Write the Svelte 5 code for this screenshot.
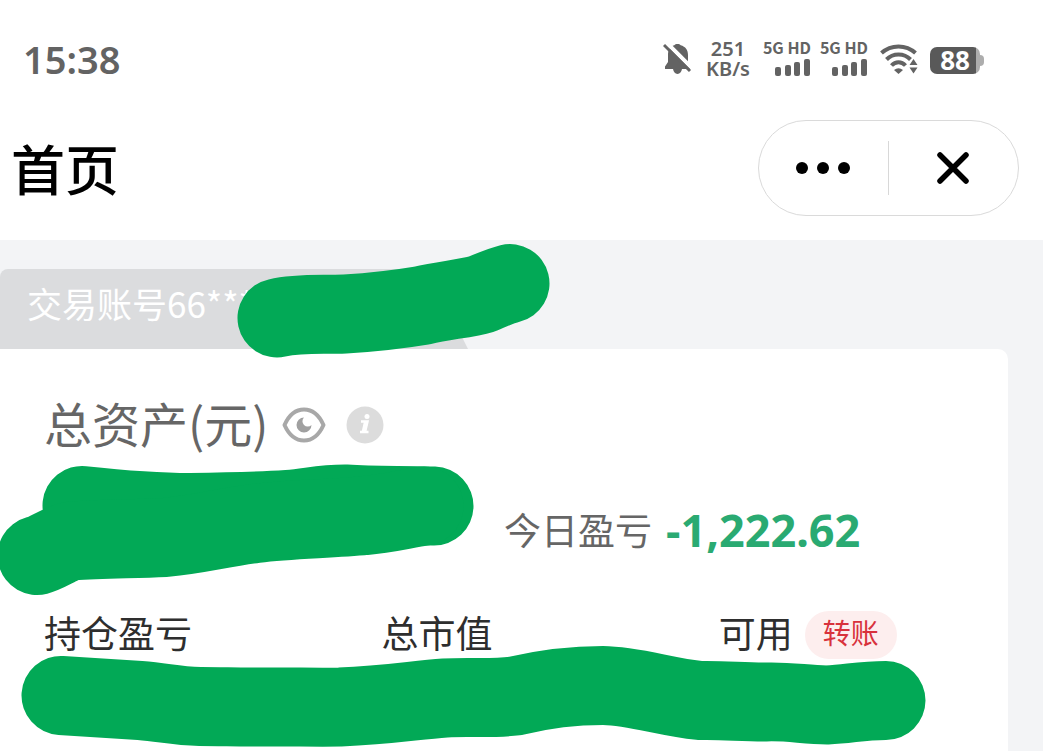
<script>
  const networks = ['5G HD', '5G HD'];
  const holdings = [
    { label: '持仓盈亏' },
    { label: '总市值' },
    { label: '可用', action: '转账' }
  ];
</script>

<div class="page">
  <div class="status">
    <time class="clock">15:38</time>
    <div class="indicators">
      <svg class="bell" width="30" height="34" viewBox="0 0 30 34" aria-hidden="true">
        <path d="M14.500 2c1.500 0 2.500.5 3.200 1.200C22.500 4.500 25 8 25 13v7l3 4.500V27h-9c-.6 2.800-2 5-4.500 5S10.600 29.800 10 27H2v-2.500L5 20v-7c0-5 2-8.500 6.300-9.800C12 2.500 13 2 14.500 2z" fill="#636363" />
        <path d="M2-1 31 28" stroke="#fff" stroke-width="4" />
        <path d="M1 3 27 29" stroke="#636363" stroke-width="3" />
      </svg>
      <div class="speed">251 KB/s</div>
      {#each networks as name}
        <div class="network">
          <span>{name}</span>
          <svg width="36" height="17" viewBox="0 0 36 17" fill="#636363" aria-hidden="true">
            <rect x="0" y="8" width="6" height="9" rx="2" />
            <rect x="10" y="6" width="6" height="11" rx="2" />
            <rect x="19" y="3" width="6" height="14" rx="2" />
            <rect x="29" y="0" width="6" height="17" rx="2" />
          </svg>
        </div>
      {/each}
      <svg class="wifi" width="38" height="30" viewBox="0 0 38 30" aria-hidden="true">
        <g fill="none" stroke="#636363" stroke-width="4">
          <path d="M1.500 9C11 .2 26 .2 35.500 9" />
          <path d="M6.500 15.500C13 8.700 24 8.700 30.500 15.500" />
          <path d="M11.500 21.500C15.500 17 21.500 17 25.500 21.500" />
        </g>
        <path d="M14 26Q18.500 22.500 23 26L18.500 30z" fill="#636363" />
        <path d="M33.500 15 37.500 21h-8zM29.500 23.500h8L33.500 29.500z" fill="#636363" stroke="#fff" stroke-width="1.500" paint-order="stroke" />
      </svg>
      <div class="battery"><span>88</span></div>
    </div>
  </div>

  <header>
    <h1>首页</h1>
    <div class="capsule">
      <button aria-label="更多">
        <svg width="56" height="12" viewBox="0 0 56 12" aria-hidden="true">
          <circle cx="6" cy="6" r="6" /><circle cx="27" cy="6" r="6" /><circle cx="48" cy="6" r="6" />
        </svg>
      </button>
      <i></i>
      <button aria-label="关闭">
        <svg width="34" height="34" viewBox="0 0 34 34" aria-hidden="true">
          <path d="M3 4 29 30M29 4 3 30" stroke="#000" stroke-width="5.500" stroke-linecap="round" />
        </svg>
      </button>
    </div>
  </header>

  <main>
    <button class="account">交易账号66****</button>
    <section class="card">
      <div class="total">
        <h2>总资产(元)</h2>
        <button class="eye" aria-label="隐藏金额">
          <svg width="44" height="36" viewBox="0 0 44 36" aria-hidden="true">
            <path d="M2.500 18C7 8 14 2.500 22 2.500S37 8 41.500 18C37 28 30 33.500 22 33.500S7 28 2.500 18z" fill="none" stroke="#a8a8a8" stroke-width="4" stroke-linejoin="round" />
            <path d="M22 10.500a7.500 7.500 0 1 0 7.500 7.500 5 5 0 0 1-7.500-7.500z" fill="#a0a0a0" />
          </svg>
        </button>
        <button class="info" aria-label="说明">
          <svg width="38" height="38" viewBox="0 0 38 38" aria-hidden="true">
            <circle cx="19" cy="19" r="18.500" fill="#dcdcdc" />
            <circle cx="21" cy="10.500" r="2.500" fill="#fff" />
            <path d="M15 15.500h6.500L19 26h3.500M14 26h5" fill="none" stroke="#fff" stroke-width="2.500" />
            <path d="M20 15.500 17.500 26.500" stroke="#fff" stroke-width="4" />
          </svg>
        </button>
      </div>
      <div class="today">
        <span>今日盈亏</span>
        <strong>-1,222.62</strong>
      </div>
      <div class="holdings">
        {#each holdings as item}
          <div class="holding">
            <span>{item.label}</span>
            {#if item.action}<button>{item.action}</button>{/if}
          </div>
        {/each}
      </div>
    </section>
    <svg class="marker" width="960" height="511" viewBox="0 240 960 511" aria-hidden="true">
      <g fill="none" stroke="#02a956" stroke-width="79" stroke-linecap="round" stroke-linejoin="round">
        <path d="M277 318C300 313 320 315 345 314C370 312.500 398 309.500 422 305.500C445 300 465 299 482 294C494 289 500 286 510 283.500" />
        <path d="M82 505.500C115 509 150 512.500 190 512.500C230 512 265 511 288 509.500C310 508 320 504 345 504C375 506 400 505 434 506" />
        <path d="M424 506C400 510 385 514 365 515.500C330 519 290 519 255 523.500C220 528 200 534 165 537.500C130 539 100 539 72 541C60 543 50 552 37 555.500" />
        <path d="M61 695.500C90 697.500 115 699 140 700.500C165 702.500 175 706 200 706.500C225 706.500 240 707.500 265 707C290 706.500 310 707.500 340 707C390 705 415 700 445 698C470 696.500 490 699 515 696C540 690 565 685.500 603 685.500C635 686 665 697 700 700.500C725 700 740 702 765 702C790 701 805 705 827 705C850 704 860 700.500 886 700.500" />
      </g>
    </svg>
  </main>
</div>

<style>
  :global(body) {
    margin: 0;
    background: #f3f4f6;
  }
  .page {
    min-height: 100vh;
    overflow: hidden;
    font-family: "Noto Sans CJK SC", "Noto Sans", sans-serif;
    color: #2e2e2e;
  }
  button {
    margin: 0;
    padding: 0;
    border: 0;
    background: none;
    font: inherit;
    color: inherit;
    cursor: pointer;
  }
  svg {
    display: block;
  }
  .status {
    display: flex;
    align-items: center;
    justify-content: space-between;
    height: 120px;
    padding: 0 63px 2px 23px;
    box-sizing: border-box;
    background: #fff;
    color: #636363;
  }
  .clock {
    font: 600 38px/40px "Noto Sans", sans-serif;
  }
  .indicators {
    display: flex;
    align-items: center;
    gap: 12px;
  }
  .speed {
    width: 46px;
    font: 600 20px/20px "Noto Sans", sans-serif;
    text-align: center;
  }
  .network {
    display: flex;
    flex-direction: column;
    align-items: flex-end;
    gap: 1px;
    width: 48px;
    margin-right: -3px;
    font: 700 16px/18px "Noto Sans CJK SC", sans-serif;
    white-space: nowrap;
  }
  .network span {
    margin-top: -4px;
    padding-bottom: 2px;
  }
  .wifi {
    margin-left: 3px;
  }
  .battery {
    position: relative;
    width: 50px;
    height: 27px;
    margin-top: 2px;
    border-radius: 7px;
    background: linear-gradient(90deg, #595959 46px, #adadad 46px);
    color: #fff;
    font: 700 26px/27px "Noto Sans", sans-serif;
    text-align: center;
  }
  .battery::after {
    content: "";
    position: absolute;
    left: 50px;
    top: 8px;
    width: 4px;
    height: 11px;
    border-radius: 0 4px 4px 0;
    background: #adadad;
  }
  header {
    display: flex;
    align-items: flex-start;
    justify-content: space-between;
    height: 120px;
    padding: 0 24px 0 11px;
    box-sizing: border-box;
    background: #fff;
  }
  h1 {
    margin: 0;
    font-size: 54px;
    line-height: 96px;
    font-weight: 500;
    color: #000;
  }
  .capsule {
    display: flex;
    align-items: center;
    width: 261px;
    height: 96px;
    box-sizing: border-box;
    border: 1px solid #dadada;
    border-radius: 48px;
  }
  .capsule button {
    flex: 1;
    display: flex;
    align-items: center;
    justify-content: center;
    height: 100%;
  }
  .capsule i {
    width: 1px;
    height: 54px;
    background: #d8d8d8;
  }
  main {
    position: relative;
    padding-top: 29px;
  }
  .account {
    display: block;
    width: 468px;
    height: 80px;
    padding: 0 0 12px 27px;
    border-radius: 8px 0 0 0;
    background: #dbdcde;
    clip-path: polygon(0 0, 428px 0, 100% 100%, 0 100%);
    color: #fff;
    font-size: 35px;
    line-height: 68px;
    text-align: left;
  }
  .card {
    min-height: 402px;
    margin-right: 35px;
    padding: 40px 0 0 44px;
    box-sizing: border-box;
    border-radius: 0 10px 0 0;
    background: #fff;
  }
  .total {
    display: flex;
    align-items: center;
    height: 72px;
  }
  h2 {
    margin: 0 14px 0 0;
    padding-bottom: 6px;
    font-size: 48px;
    line-height: 66px;
    font-weight: 400;
    color: #666;
  }
  .info {
    margin-left: 20px;
  }
  .today {
    display: flex;
    align-items: center;
    gap: 14px;
    height: 64px;
    margin: 37px 0 0 460px;
    font-size: 37px;
    line-height: 62px;
    color: #666;
    white-space: nowrap;
  }
  .today span {
    padding-bottom: 2px;
  }
  .today strong {
    font: 700 45px/64px "Noto Sans", sans-serif;
    color: #2aaa72;
  }
  .holdings {
    display: grid;
    grid-template-columns: 35% 35% 1fr;
    margin-top: 49px;
    font-size: 37px;
    line-height: 42px;
  }
  .holding {
    display: flex;
    align-items: center;
    gap: 12px;
    height: 48px;
    white-space: nowrap;
  }
  .holding span {
    padding-bottom: 6px;
  }
  .holding button {
    width: 92px;
    height: 48px;
    padding-bottom: 6px;
    border-radius: 24px;
    background: #fdeeee;
    color: #d8323c;
    font-size: 28px;
    line-height: 42px;
  }
  .marker {
    position: absolute;
    left: 0;
    top: 0;
    pointer-events: none;
  }
</style>
